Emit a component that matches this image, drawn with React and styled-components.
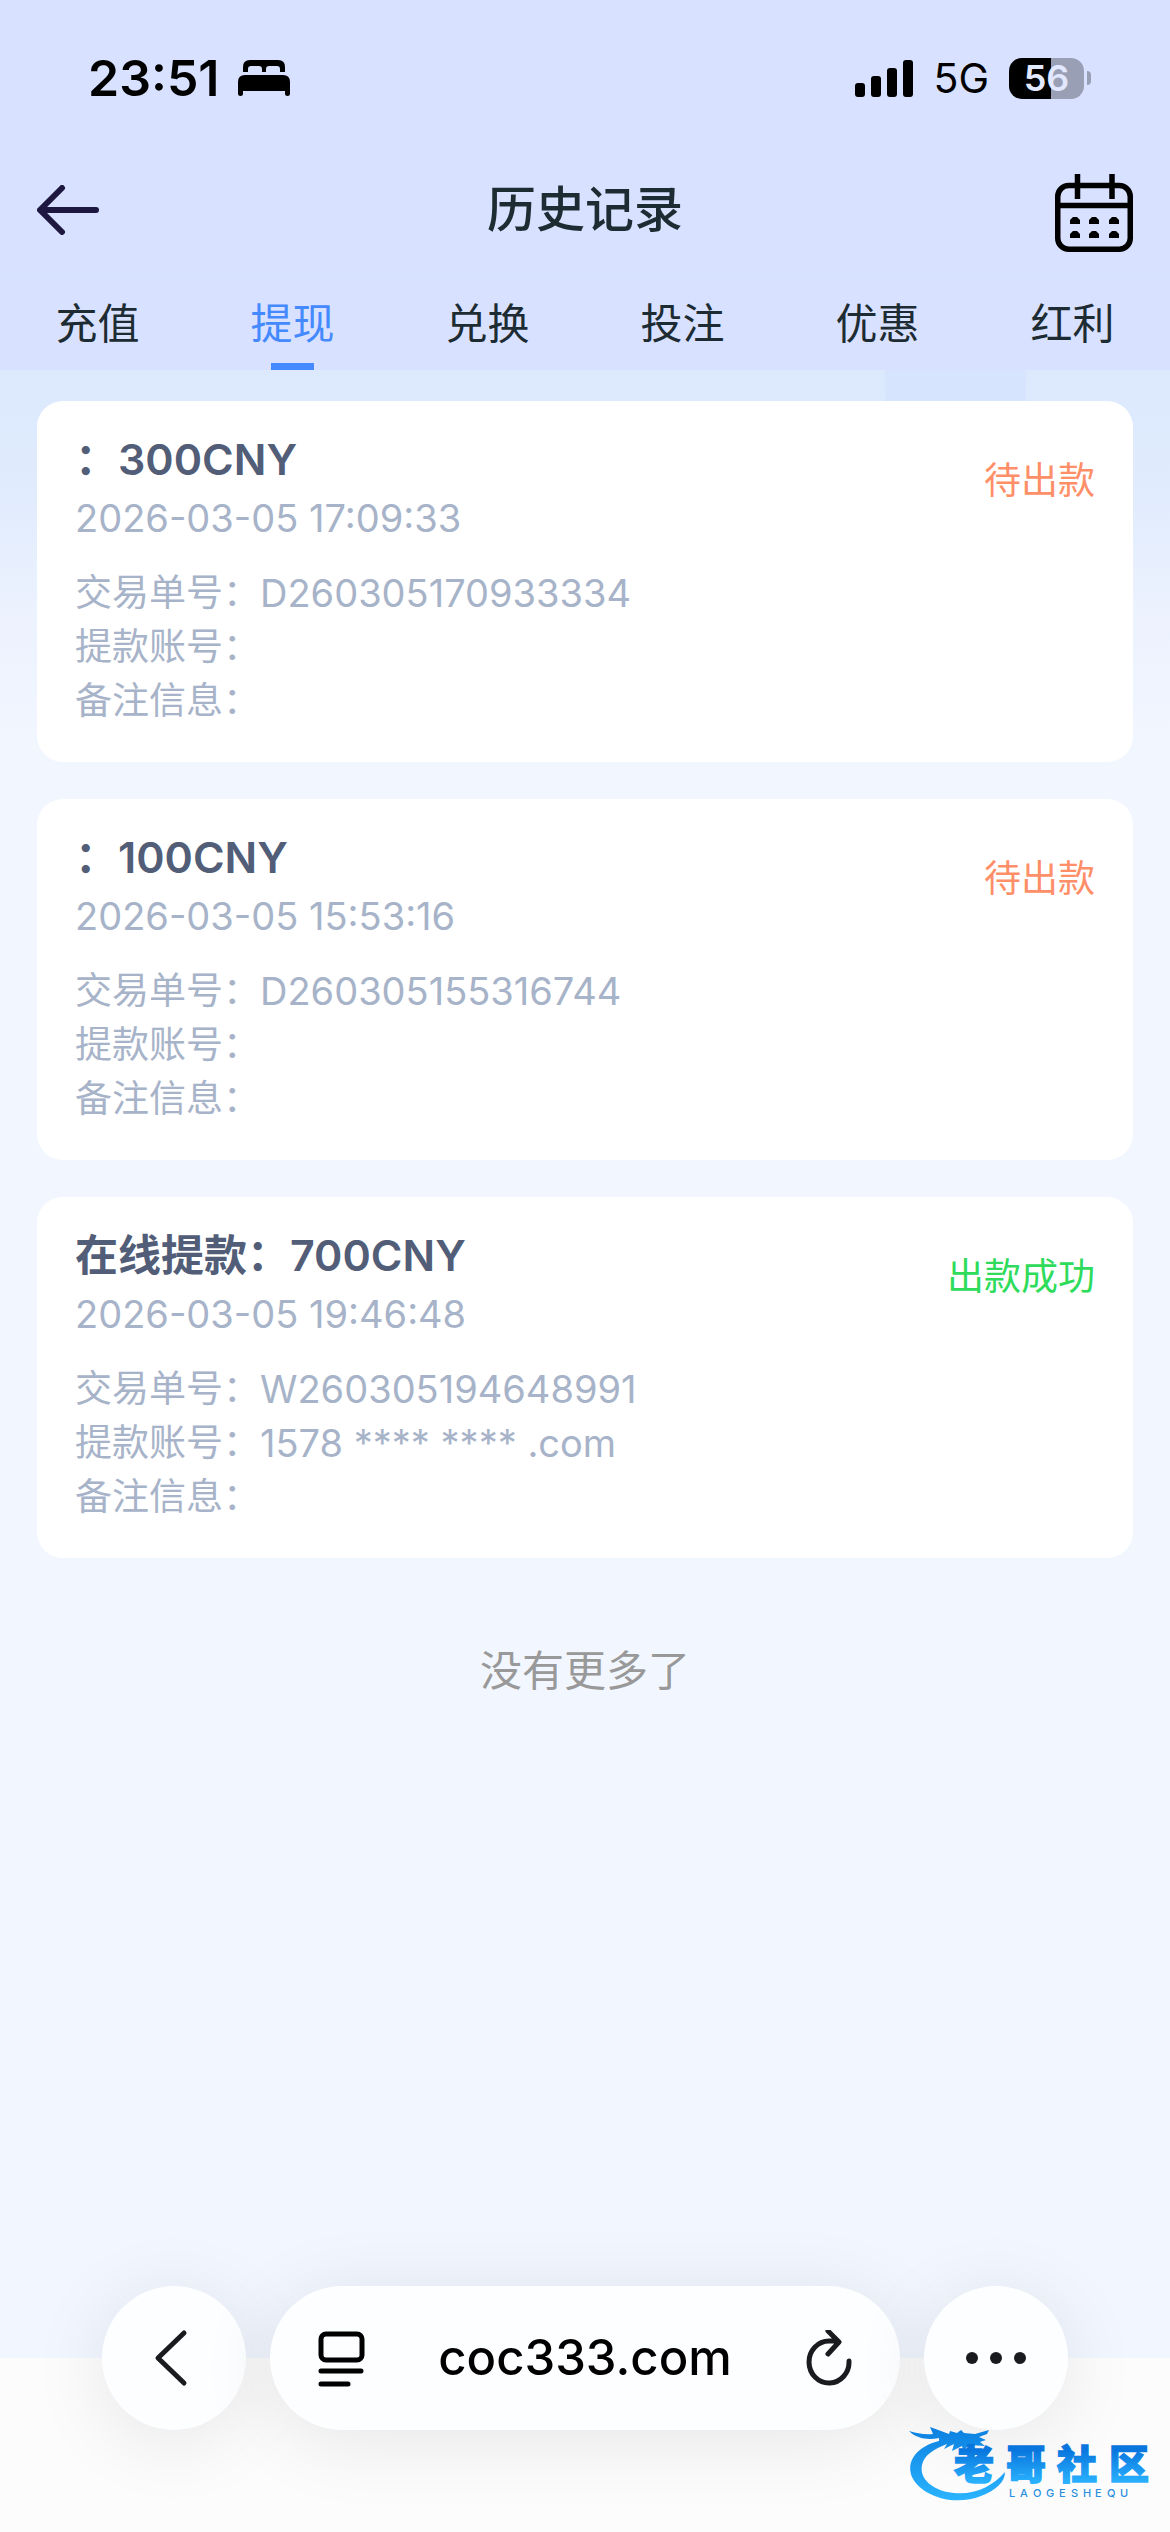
import React, { useState } from "react";
import styled, { createGlobalStyle } from "styled-components";

const GlobalStyle = createGlobalStyle`
  *, *::before, *::after { box-sizing: border-box; }
  html, body { margin: 0; padding: 0; }
  body {
    font-family: Inter, "Noto Sans CJK SC", sans-serif;
    background: #fafafa;
  }
  button { font: inherit; color: inherit; background: none; border: 0; padding: 0; cursor: pointer; }
`;

const Screen = styled.div`
  min-height: 100vh;
  display: flex;
  flex-direction: column;
`;

const TopArea = styled.header`
  background: #d8e1ff;
`;

const StatusBar = styled.div`
  height: 156px;
  padding: 0 79px 0 88px;
  display: flex;
  align-items: center;
  justify-content: space-between;
`;

const StatusGroup = styled.div`
  display: flex;
  align-items: center;
  gap: ${(p) => p.$gap}px;
  svg { display: block; }
`;

const Clock = styled.time`
  font-size: 50px;
  line-height: 60px;
  font-weight: 600;
  color: #000;
`;

const Network = styled.span`
  font-size: 41px;
  line-height: 60px;
  color: #000;
`;

const Battery = styled.div`
  display: flex;
  align-items: center;
  gap: 3px;
`;

const BatteryBody = styled.div`
  width: 75px;
  height: 41px;
  border-radius: 13px;
  background: linear-gradient(to right, #000 56%, #99a0b5 56%);
  color: #e2e8ff;
  font-size: 36px;
  line-height: 41px;
  font-weight: 600;
  text-align: center;
`;

const BatteryNub = styled.div`
  width: 4px;
  height: 14px;
  border-radius: 0 4px 4px 0;
  background: #99a0b5;
`;

const TitleBar = styled.div`
  height: 120px;
  padding: 0 37px 12px;
  display: grid;
  grid-template-columns: 80px 1fr 80px;
  align-items: center;
`;

const PageTitle = styled.h1`
  margin: 0;
  font-size: 49px;
  line-height: 64px;
  font-weight: 500;
  text-align: center;
  color: #1d2b32;
`;

const IconButton = styled.button`
  display: flex;
  justify-content: ${(p) => p.$align};
  svg { display: block; }
`;

const Tabs = styled.nav`
  height: 94px;
  display: grid;
  grid-template-columns: repeat(6, 1fr);
  border-top: 2px solid #d7e4ff;
`;

const Tab = styled.button`
  display: flex;
  flex-direction: column;
  align-items: center;
  justify-content: space-between;
  padding-top: 16px;
  font-size: 42px;
  line-height: 60px;
  color: ${(p) => (p.$active ? "#4589ff" : "#1d2b32")};
  &::after {
    content: "";
    width: 43px;
    height: 7px;
    background: ${(p) => (p.$active ? "#4589ff" : "transparent")};
  }
`;

const Content = styled.main`
  flex: 1;
  display: flex;
  flex-direction: column;
  gap: 37px;
  padding: 31px 37px 0;
  background:
    linear-gradient(#d7e4fe, #d7e4fe) 86% 0 / 141px 60px no-repeat,
    linear-gradient(to bottom, #dce9fd 0, #e0ebfd 120px, #ecf2fe 240px, #f2f7ff 400px, #f2f7ff 100%);
`;

const Card = styled.article`
  display: flex;
  flex-direction: column;
  padding: 32px 38px 34px 38px;
  border-radius: 26px;
  background: #fff;
`;

const CardHead = styled.div`
  display: flex;
  align-items: center;
  justify-content: space-between;
  margin-bottom: 15px;
`;

const Amount = styled.h2`
  margin: 0;
  font-size: 43px;
  line-height: 52px;
  font-weight: 600;
  color: #525d78;
`;

const Stamp = styled.time`
  display: block;
  font-size: 38px;
  line-height: 66px;
  color: #a7b3c8;
`;

const Status = styled.span`
  font-size: 37px;
  line-height: 54px;
  margin-bottom: 22px;
  color: ${(p) => (p.$done ? "#2fdb5b" : "#ff8f68")};
`;

const Details = styled.dl`
  margin: 0;
`;

const Detail = styled.div`
  display: flex;
  line-height: 54px;
  color: #a7b3c8;
  dt, dd { margin: 0; }
  dt { font-size: 37px; }
  dd { font-size: 38px; }
`;

const NoMore = styled.p`
  margin: 0;
  padding-top: 46px;
  font-size: 42px;
  line-height: 60px;
  text-align: center;
  color: #999;
`;

const BrowserBar = styled.footer`
  position: relative;
  padding: 0 102px 102px;
  display: grid;
  grid-template-columns: 144px 1fr 144px;
  gap: 24px;
  background: linear-gradient(to bottom, #f2f7ff 72px, #fcfcfc 72px);
`;

const Round = styled.button`
  height: 144px;
  border-radius: 72px;
  display: flex;
  align-items: center;
  justify-content: center;
  background: #fdfeff;
  box-shadow: 0 10px 80px rgba(0, 0, 0, 0.09);
`;

const AddressPill = styled.div`
  height: 144px;
  border-radius: 72px;
  padding: 0 47px;
  display: flex;
  align-items: center;
  justify-content: space-between;
  background: #fdfeff;
  box-shadow: 0 10px 80px rgba(0, 0, 0, 0.09);
`;

const Address = styled.button`
  font-size: 49px;
  line-height: 60px;
  font-weight: 500;
  color: #000;
`;

const Brand = styled.div`
  position: absolute;
  right: 18px;
  bottom: 22px;
  width: 244px;
  height: 88px;
  svg { display: block; }
`;

const SleepIcon = () => (
  <svg width="52" height="36" viewBox="0 0 52 36" aria-hidden="true">
    <path d="M5 12V7Q5 0 12 0H40Q47 0 47 7V12H42V9Q42 6 39 6H31Q28 6 28 9V12H24V9Q24 6 21 6H13Q10 6 10 9V12Z" />
    <path d="M0 22Q0 15 7 15H45Q52 15 52 22V34Q52 36 49.500 36Q47 36 47 34V31H5V34Q5 36 2.500 36Q0 36 0 34Z" />
  </svg>
);

const SignalIcon = () => (
  <svg width="58" height="37" viewBox="0 0 58 37" aria-hidden="true">
    <rect x="0" y="23" width="10" height="14" rx="3" />
    <rect x="16" y="16" width="10" height="21" rx="3" />
    <rect x="32" y="8" width="10" height="29" rx="3" />
    <rect x="48" y="0" width="10" height="37" rx="3" />
  </svg>
);

const BackArrow = () => (
  <svg width="63" height="50" viewBox="0 0 63 50" fill="none" stroke="#1e1840" strokeWidth="6" strokeLinecap="round" strokeLinejoin="round" aria-hidden="true">
    <path d="M25 3L3 25L25 47M4 25H59" />
  </svg>
);

const CalendarIcon = () => (
  <svg width="78" height="84" viewBox="0 -6 78 84" fill="none" stroke="#000" strokeWidth="5.500" aria-hidden="true">
    <rect x="2.750" y="11.500" width="72.500" height="63.700" rx="11" />
    <path d="M2 31.500H76M22.500 0V25M57 0V25" />
    <g fill="#000" stroke="none">
      {[15, 34, 54].map((x) => [43, 57].map((y) => (
        <path key={`${x}-${y}`} d={`M${x} ${y + 7}V${y + 3}L${x + 3} ${y}H${x + 7}L${x + 10} ${y + 3}V${y + 7}Z`} />
      )))}
    </g>
  </svg>
);

const ChevronIcon = () => (
  <svg width="42" height="60" viewBox="0 0 42 60" fill="none" stroke="#1a1b1e" strokeWidth="5" strokeLinecap="round" strokeLinejoin="round" aria-hidden="true">
    <path d="M31 5L5 30L31 55" />
  </svg>
);

const ReaderIcon = () => (
  <svg width="48" height="58" viewBox="0 0 48 58" fill="none" stroke="#000" strokeWidth="5" strokeLinecap="round" aria-hidden="true">
    <rect x="4" y="5" width="41" height="26" rx="5" />
    <path d="M4 42H44M4 55H31" />
  </svg>
);

const ReloadIcon = () => (
  <svg width="48" height="56" viewBox="0 0 48 56" fill="none" stroke="#1a1b1e" strokeWidth="5" strokeLinecap="round" strokeLinejoin="round" aria-hidden="true">
    <path d="M44 31A20 21 0 1 1 24 11H33M23 1L34 12L23 24" />
  </svg>
);

const DotsIcon = () => (
  <svg width="60" height="12" viewBox="0 0 60 12" fill="#1a1b1e" aria-hidden="true">
    <circle cx="6" cy="6" r="6" />
    <circle cx="30" cy="6" r="6" />
    <circle cx="54" cy="6" r="6" />
  </svg>
);

const BrandLogo = () => (
  <svg width="244" height="88" viewBox="0 0 244 88" role="img" aria-label="老哥社区">
    <defs>
      <linearGradient id="ring" x1="0" y1="0" x2="0" y2="1">
        <stop offset="0" stopColor="#0b7fe0" />
        <stop offset="1" stopColor="#2bb4ff" />
      </linearGradient>
      <linearGradient id="word" gradientUnits="userSpaceOnUse" x1="0" y1="28" x2="0" y2="62">
        <stop offset="0" stopColor="#0876de" />
        <stop offset="1" stopColor="#2bb4ff" />
      </linearGradient>
    </defs>
    <path fill="url(#ring)" d="M31 19C7 25-2 41 4 55C13 74 46 85 73 74C88 68 97 60 97 50C85 64 67 73 46 71C25 69 11 57 14 43C16 33 26 27 39 22L36 27L46 22L44 29L54 24L55 28L62 23L77 24L72 20L78 18L71 15L79 12L81 8L67 12L56 11L53 8L49 11L42 9L41 12L33 9L22 5L25 12C17 13 8 11 1 9C9 17 20 18 31 16Z" />
    <text x="46" y="57" fontFamily="Inter, Noto Sans CJK SC" fontWeight="900" fontSize="40" fill="url(#word)" stroke="url(#word)" strokeWidth="1.500">
      <tspan x="46">老</tspan><tspan x="98">哥</tspan><tspan x="149">社</tspan><tspan x="201">区</tspan>
    </text>
    <text y="75" fontFamily="Inter" fontSize="11" fontWeight="500" fill="#2b8fdf">
      <tspan x="101 112 125 138 151 163 175 187 199 212">LAOGESHEQU</tspan>
    </text>
  </svg>
);

const TAB_NAMES = ["充值", "提现", "兑换", "投注", "优惠", "红利"];

const RECORDS = [
  { method: "", amount: "300CNY", time: "2026-03-05 17:09:33", id: "D260305170933334", account: "", done: false },
  { method: "", amount: "100CNY", time: "2026-03-05 15:53:16", id: "D260305155316744", account: "", done: false },
  { method: "在线提款", amount: "700CNY", time: "2026-03-05 19:46:48", id: "W260305194648991", account: "1578 **** **** .com", done: true },
];

const RecordCard = ({ record }) => (
  <Card>
    <CardHead>
      <div>
        <Amount>{record.method}：{record.amount}</Amount>
        <Stamp>{record.time}</Stamp>
      </div>
      <Status $done={record.done}>{record.done ? "出款成功" : "待出款"}</Status>
    </CardHead>
    <Details>
      <Detail><dt>交易单号：</dt><dd>{record.id}</dd></Detail>
      <Detail><dt>提款账号：</dt><dd>{record.account}</dd></Detail>
      <Detail><dt>备注信息：</dt><dd /></Detail>
    </Details>
  </Card>
);

export default function App() {
  const [active, setActive] = useState(1);
  return (
    <Screen>
      <GlobalStyle />
      <TopArea>
        <StatusBar>
          <StatusGroup $gap={18}>
            <Clock>23:51</Clock>
            <SleepIcon />
          </StatusGroup>
          <StatusGroup $gap={20}>
            <SignalIcon />
            <Network>5G</Network>
            <Battery>
              <BatteryBody>56</BatteryBody>
              <BatteryNub />
            </Battery>
          </StatusGroup>
        </StatusBar>
        <TitleBar>
          <IconButton $align="flex-start" aria-label="返回"><BackArrow /></IconButton>
          <PageTitle>历史记录</PageTitle>
          <IconButton $align="flex-end" aria-label="选择日期"><CalendarIcon /></IconButton>
        </TitleBar>
        <Tabs>
          {TAB_NAMES.map((name, i) => (
            <Tab key={name} $active={i === active} onClick={() => setActive(i)}>{name}</Tab>
          ))}
        </Tabs>
      </TopArea>
      <Content>
        {RECORDS.map((r) => <RecordCard key={r.id} record={r} />)}
        <NoMore>没有更多了</NoMore>
      </Content>
      <BrowserBar>
        <Round aria-label="后退"><ChevronIcon /></Round>
        <AddressPill>
          <IconButton aria-label="页面菜单"><ReaderIcon /></IconButton>
          <Address>coc333.com</Address>
          <IconButton aria-label="刷新"><ReloadIcon /></IconButton>
        </AddressPill>
        <Round aria-label="更多"><DotsIcon /></Round>
        <Brand><BrandLogo /></Brand>
      </BrowserBar>
    </Screen>
  );
}
